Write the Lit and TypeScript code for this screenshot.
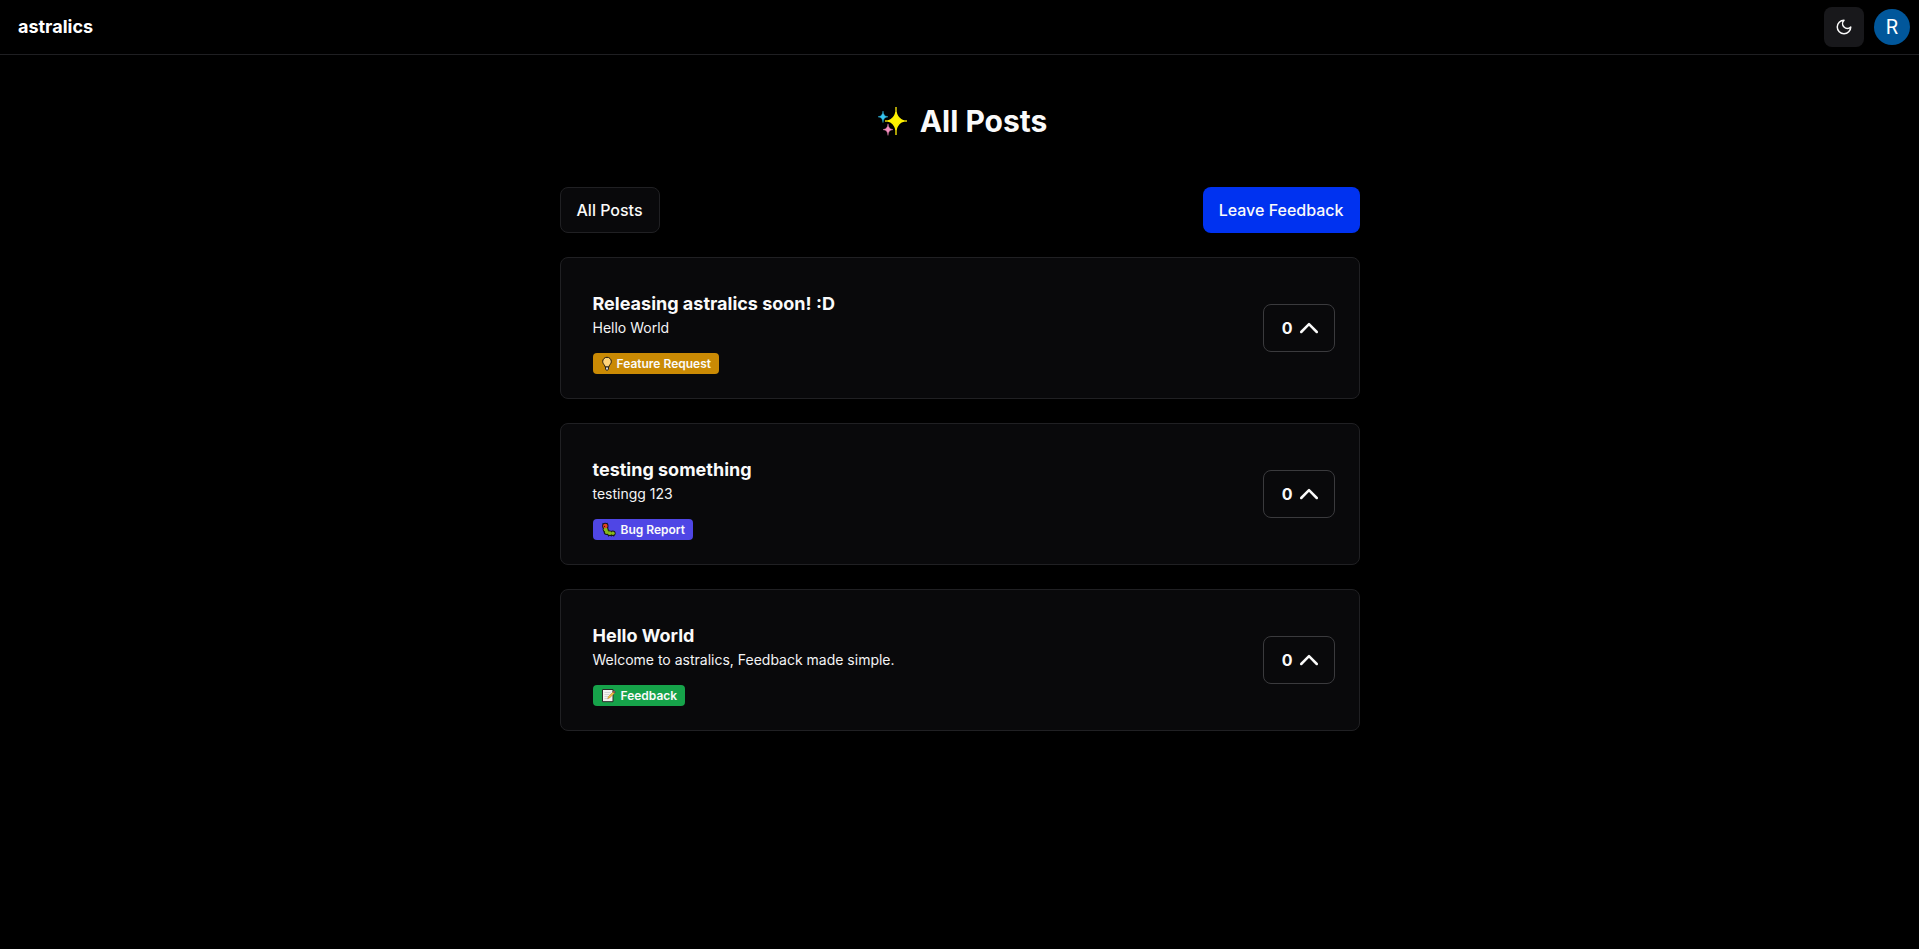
import { LitElement, html, css, nothing } from "lit";
import { customElement, property } from "lit/decorators.js";

type Kind = "feature" | "bug" | "feedback";

interface Post {
  title: string;
  body: string;
  kind: Kind;
  votes: number;
}

const POSTS: Post[] = [
  { title: "Releasing astralics soon! :D", body: "Hello World", kind: "feature", votes: 0 },
  { title: "testing something", body: "testingg 123", kind: "bug", votes: 0 },
  { title: "Hello World", body: "Welcome to astralics, Feedback made simple.", kind: "feedback", votes: 0 },
];

const LABELS: Record<Kind, string> = {
  feature: "Feature Request",
  bug: "Bug Report",
  feedback: "Feedback",
};

const bulb = html`<svg width="12" height="15" viewBox="0 0 12 15" aria-hidden="true">
  <path d="M6 1.300a4.200 4.200 0 0 0-4.300 4.200c0 1.700 1 2.600 1.700 3.700.5.700.7 1.200.7 1.800h3.800c0-.6.2-1.100.7-1.800.7-1.100 1.700-2 1.700-3.700A4.200 4.200 0 0 0 6 1.300z" fill="#ffd47a" stroke="#1d1710" stroke-width="1"/>
  <path d="M4.500 11h3v2l-.8 1.200H5.300L4.500 13z" fill="#d5d9dc" stroke="#1d1710" stroke-width=".9"/>
</svg>`;

const bug = html`<svg width="16" height="15" viewBox="0 0 16 15" aria-hidden="true">
  <g fill="#16181a">
    <circle cx="4.300" cy="4" r="3.200"/><circle cx="4.600" cy="7.200" r="2.900"/>
    <circle cx="5.600" cy="10" r="2.900"/><circle cx="8.600" cy="11.200" r="2.800"/>
    <circle cx="11.800" cy="11.200" r="2.800"/>
    <path d="M1.200.8l2 1.200-1 1zM6.600.6l-1.600 1.400 1.200.8zM7 12.500h1v2H7zM9.800 12.500h1v2h-1zM12.200 12.500h1v2h-1z"/>
  </g>
  <g fill="#86b81c">
    <circle cx="4.600" cy="7.400" r="2"/><circle cx="5.800" cy="10" r="2"/>
    <circle cx="8.800" cy="11.200" r="1.900"/><circle cx="11.900" cy="11.200" r="1.800"/>
  </g>
  <circle cx="4.300" cy="4" r="2.300" fill="#e8421f"/>
  <circle cx="3.500" cy="4.300" r=".6" fill="#16181a"/>
</svg>`;

const memo = html`<svg width="16" height="15" viewBox="0 0 16 15" aria-hidden="true">
  <path d="M1.500 1.500h10.500v12.200H1.500z" fill="#f3f3f1" stroke="#2a2a28" stroke-width="1"/>
  <path d="M3.500 4.500h6M3.500 6.500h5M3.500 8.500h3.500M3.500 10.500h3" stroke="#c3c6c8" stroke-width=".7"/>
  <path d="M6.600 10.800l.8-2.200 5-5 1.300 1.300-5 5z" fill="#f8bd46" stroke="#8a6a2c" stroke-width=".4"/>
  <path d="M12 3.700l1-1.100 1.400 1.400-1.100 1.100z" fill="#e0596b" stroke="#2a2a28" stroke-width=".5"/>
</svg>`;

const GLYPHS = { feature: bulb, bug, feedback: memo };

const sparkles = html`<svg width="30" height="30" viewBox="1 -1 30 30" aria-hidden="true">
  <path d="M18 0h2v8h-2zM18 20h2v8h-2zM8 13h6v2H8zM24 13h6v2h-6z" fill="#a89d04"/>
  <path d="M19 5.500c1.300 5 3.200 7.200 7.500 8.500-4.300 1.300-6.200 3.500-7.500 8.500-1.300-5-3.200-7.200-7.500-8.500 4.300-1.300 6.200-3.500 7.500-8.500z" fill="#fff100" stroke="#fff100" stroke-width="1.500" stroke-linejoin="round"/>
  <path d="M6 4c.4 3.800 1.500 5.200 5 5.800-3.500.6-4.600 2-5 5.800-.4-3.800-1.500-5.200-5-5.800 3.500-.6 4.600-2 5-5.800z" fill="#35c5f0" stroke="#35c5f0" stroke-width=".4"/>
  <path d="M11 16.800c.4 3.800 1.500 5.200 5 5.800-3.500.6-4.600 2-5 5.800-.4-3.800-1.500-5.200-5-5.800 3.500-.6 4.600-2 5-5.800z" fill="#f78fc0" stroke="#f78fc0" stroke-width=".4"/>
</svg>`;

@customElement("post-card")
export class PostCard extends LitElement {
  @property({ attribute: false }) post?: Post;

  static styles = css`
    :host { display: block; }
    .card {
      display: flex;
      align-items: center;
      justify-content: space-between;
      gap: 24px;
      padding: 32px 24px 24px 32px;
      background: #09090b;
      border: 1px solid #202023;
      border-radius: 8px;
    }
    .copy { min-width: 0; }
    .title { margin: 0; font-size: 18px; line-height: 28px; font-weight: 700; }
    .body { margin: 0; font-size: 14px; line-height: 20px; color: #f4f4f5; }
    .badge {
      display: flex;
      width: fit-content;
      align-items: center;
      gap: 4px;
      margin-top: 15px;
      padding: 0 8px;
      border-radius: 4px;
      font-size: 12px;
      line-height: 21px;
      font-weight: 600;
    }
    .badge svg { display: block; }
    .feature { background: #ca8a04; }
    .bug { background: #4f46e5; }
    .feedback { background: #16a34a; }
    .vote {
      flex: none;
      display: flex;
      align-items: center;
      gap: 6px;
      height: 48px;
      margin-top: -8px;
      padding: 0 15px 0 18px;
      border: 1px solid #3a3a3d;
      border-radius: 8px;
      background: transparent;
      color: inherit;
      font: 700 16px/24px Inter, sans-serif;
      cursor: pointer;
    }
    .vote svg { display: block; }
  `;

  render() {
    const p = this.post;
    if (!p) return nothing;
    return html`<article class="card">
      <div class="copy">
        <h2 class="title">${p.title}</h2>
        <p class="body">${p.body}</p>
        <span class="badge ${p.kind}">${GLYPHS[p.kind]}${LABELS[p.kind]}</span>
      </div>
      <button class="vote" type="button" aria-label="Upvote, ${p.votes} votes">
        ${p.votes}
        <svg width="20" height="20" viewBox="0 0 20 20" fill="none" stroke="currentColor" stroke-width="2.500" stroke-linecap="round" stroke-linejoin="round" aria-hidden="true">
          <path d="M2.200 14l7.800-7.800 7.800 7.800"/>
        </svg>
      </button>
    </article>`;
  }
}

@customElement("app-root")
export class AppRoot extends LitElement {
  static styles = css`
    :host {
      display: block;
      min-height: 100vh;
      background: #000;
      color: #fafafa;
      font-family: Inter, sans-serif;
    }
    .bar {
      display: flex;
      align-items: center;
      justify-content: space-between;
      height: 54px;
      padding: 0 9px 0 18px;
      border-bottom: 1px solid #1f1f22;
    }
    .brand { color: #fff; font-size: 18px; line-height: 28px; font-weight: 700; text-decoration: none; }
    .tools { display: flex; align-items: center; gap: 10px; }
    .theme {
      display: grid;
      place-items: center;
      width: 40px;
      height: 40px;
      padding: 0;
      border: 0;
      border-radius: 8px;
      background: #18181b;
      color: #fafafa;
      cursor: pointer;
    }
    .avatar {
      width: 36px;
      height: 36px;
      padding: 0;
      border: 0;
      border-radius: 50%;
      background: #01579b;
      color: #fff;
      font: 400 20px/36px Roboto, sans-serif;
      cursor: pointer;
    }
    .page { max-width: 800px; margin: 0 auto; padding: 48px 0; }
    .heading {
      display: flex;
      align-items: center;
      justify-content: center;
      gap: 12px;
      margin: 0 0 48px;
      padding-left: 6px;
      font-size: 30px;
      line-height: 36px;
      font-weight: 700;
    }
    .heading svg { overflow: visible; }
    .actions { display: flex; justify-content: space-between; margin-bottom: 24px; }
    .btn {
      height: 46px;
      padding: 0 16px;
      border: 1px solid #202023;
      border-radius: 8px;
      background: #09090b;
      color: #fafafa;
      font: 500 16px/24px Inter, sans-serif;
      cursor: pointer;
    }
    .primary { border: 0; background: #0032f0; }
    .list { display: flex; flex-direction: column; gap: 24px; }
  `;

  render() {
    return html`
      <header class="bar">
        <a class="brand" href="#">astralics</a>
        <div class="tools">
          <button class="theme" type="button" aria-label="Toggle theme">
            <svg width="18" height="18" viewBox="0 0 24 24" fill="none" stroke="currentColor" stroke-width="2" stroke-linecap="round" stroke-linejoin="round" aria-hidden="true">
              <path d="M12 3a6 6 0 0 0 9 9 9 9 0 1 1-9-9Z"/>
            </svg>
          </button>
          <button class="avatar" type="button" aria-label="Account">R</button>
        </div>
      </header>
      <main class="page">
        <h1 class="heading">${sparkles}All Posts</h1>
        <div class="actions">
          <button class="btn" type="button">All Posts</button>
          <button class="btn primary" type="button">Leave Feedback</button>
        </div>
        <div class="list">
          ${POSTS.map((p) => html`<post-card .post=${p}></post-card>`)}
        </div>
      </main>
    `;
  }
}
